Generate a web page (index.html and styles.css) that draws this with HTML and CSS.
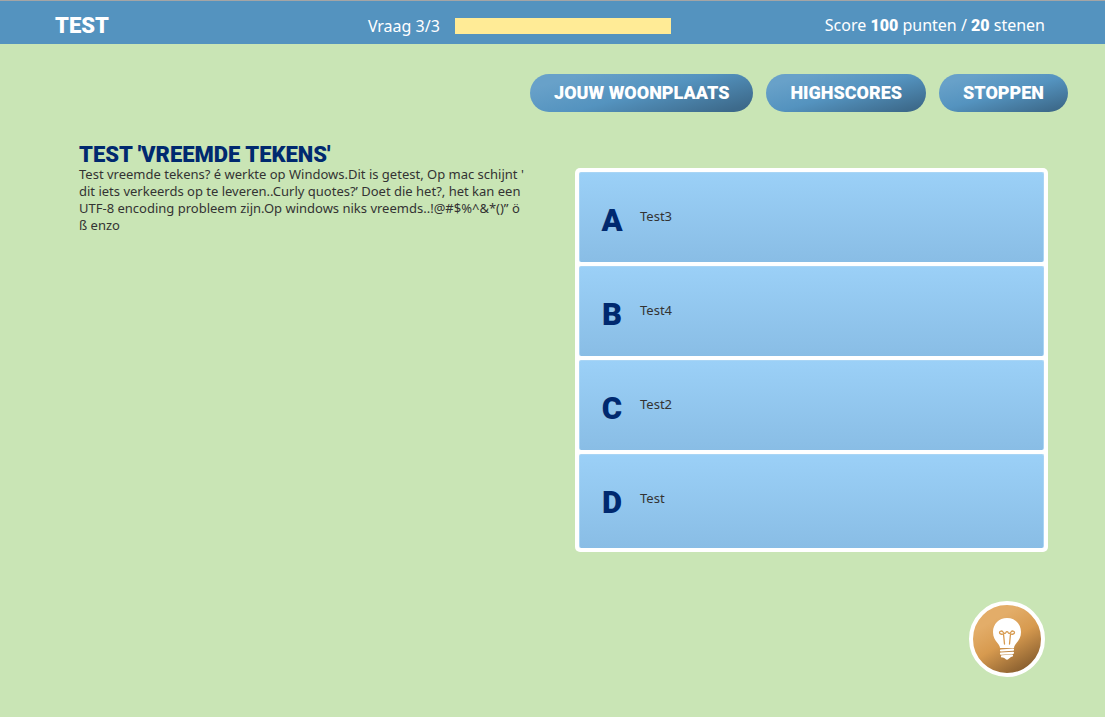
FILE: index.html
```html
<!DOCTYPE html>
<html lang="nl">
<head>
<meta charset="utf-8">
<meta name="viewport" content="width=device-width, initial-scale=1">
<title>Test</title>
<link rel="stylesheet" href="styles.css">
</head>
<body>
<header class="topbar">
  <h1 class="topbar-title">Test</h1>
  <div class="progress">
    <span id="progress-label">Vraag 3/3</span>
    <div class="progress-bar" role="progressbar" aria-labelledby="progress-label" aria-valuemin="0" aria-valuemax="3" aria-valuenow="3"></div>
  </div>
  <p class="score">Score <strong>100</strong> punten / <strong>20</strong> stenen</p>
</header>
<nav class="actions">
  <button class="pill pill-spaced" type="button">Jouw woonplaats</button>
  <button class="pill" type="button">Highscores</button>
  <button class="pill" type="button">Stoppen</button>
</nav>
<main class="quiz">
  <section class="question">
    <h2 class="question-title">Test 'vreemde tekens'</h2>
    <p class="question-text">Test vreemde tekens? é werkte op Windows.Dit is getest, Op mac schijnt ' dit iets verkeerds op te leveren..Curly quotes?’ Doet die het?, het kan een UTF-8 encoding probleem zijn.Op windows niks vreemds..!@#$%^&amp;*()” ö ß enzo</p>
  </section>
  <div class="answers">
    <button class="answer" type="button"><span class="letter">A</span><span class="answer-text">Test3</span></button>
    <button class="answer" type="button"><span class="letter">B</span><span class="answer-text">Test4</span></button>
    <button class="answer" type="button"><span class="letter">C</span><span class="answer-text">Test2</span></button>
    <button class="answer answer-last" type="button"><span class="letter">D</span><span class="answer-text">Test</span></button>
  </div>
</main>
<footer class="help">
  <button class="hint" type="button" aria-label="Hint">
    <svg class="hint-icon" viewBox="0 0 30 42" aria-hidden="true">
      <path fill="#fff" d="M15 0C7 0 1 6 1 14c0 5 2 8 4.500 11 1.800 2 2.300 3.500 2.500 5h14c.2-1.500.7-3 2.500-5C27 22 29 19 29 14 29 6 23 0 15 0z"/>
      <g fill="none" stroke="#d79a4f" stroke-width="1.300" stroke-linecap="round" stroke-linejoin="round">
        <path d="M12.500 26L11.500 16C10 16.500 7.500 16.200 7.500 14.500S10 12.500 11 14c1 1.800 2.300 1.800 3 .2.300-.8 1.700-.8 2 0 .7 1.600 2 1.600 3-.2 1-1.500 3.500-1.200 3.500.5S20 16.500 18.500 16L17.500 26"/>
      </g>
      <path fill="none" stroke="#fff" stroke-width="2.200" stroke-linecap="round" d="M9 32.500l12-.8M9 35.600l12-.8M10 38.300l10-.7"/>
      <path fill="#fff" d="M10.500 38.500l9-.6c-1 2.100-2.500 2.300-3 3.100-.7 1-2.300 1-3 0-.5-.8-2-1-3-2.500z"/>
    </svg>
  </button>
</footer>
</body>
</html>
```
FILE: styles.css
```css
* {
  box-sizing: border-box;
}

body {
  margin: 0;
  background: #c9e5b5;
  color: #333;
  font-family: "Noto Sans", sans-serif;
  font-size: 13px;
  line-height: 17px;
}

h1, h2, p {
  margin: 0;
}

button {
  border: 0;
  color: inherit;
  font: inherit;
  cursor: pointer;
}

.topbar-title,
.score strong,
.pill,
.question-title,
.letter {
  font-family: Roboto, sans-serif;
  font-weight: 900;
  text-transform: uppercase;
}

.topbar {
  display: grid;
  grid-template-columns: 315fr 460fr auto;
  align-items: center;
  padding: 8px 60px 2px 55px;
  border-top: 1px solid #a5a5a5;
  background: #5493bf;
  color: #fff;
  font-size: 16px;
  line-height: 32px;
}

.topbar-title {
  font-size: 22px;
  line-height: 32px;
}

.progress {
  display: flex;
  align-items: center;
  gap: 15px;
}

.progress-bar {
  width: 216px;
  height: 16px;
  background: #ffeb96;
}

.actions {
  display: flex;
  justify-content: flex-end;
  gap: 13px;
  padding: 30px 37px 0;
}

.pill {
  padding: 0 24px;
  border-radius: 19px;
  background: linear-gradient(165deg, #68a1c9 15%, #5493bf 50%, #3d6a8b 92%);
  color: #fff;
  font-size: 18px;
  line-height: 38px;
}

.quiz {
  display: grid;
  grid-template-columns: 450fr 473fr;
  gap: 46px;
  padding: 32px 57px 0 79px;
}

.question-title {
  color: #00296f;
  font-size: 22px;
  line-height: 22px;
}

.answers {
  display: grid;
  gap: 4px;
  margin-top: 24px;
  padding: 4px;
  border-radius: 5px;
  background: #fff;
}

.answer {
  display: flex;
  align-items: flex-start;
  min-height: 90px;
  padding: 32px 16px 0;
  border: 1px solid #a9d5f5;
  border-bottom: 0;
  border-radius: 2px;
  background: linear-gradient(#9bd0f7, #89bde5);
  text-align: left;
}

.answer-last {
  min-height: 94px;
}

.letter {
  width: 32px;
  margin-right: 12px;
  color: #00296f;
  font-size: 31px;
  line-height: 32px;
  text-align: center;
}

.answer-text {
  padding-top: 3px;
}

.help {
  display: flex;
  justify-content: flex-end;
  padding: 49px 60px 40px;
}

.hint {
  display: grid;
  place-items: center;
  width: 76px;
  height: 76px;
  padding: 0;
  border: 4px solid #fff;
  border-radius: 50%;
  background: linear-gradient(150deg, #e3ad69 25%, #d79a4f 52%, #895f2f 88%);
}

.hint-icon {
  width: 30px;
  height: 42px;
}
```
